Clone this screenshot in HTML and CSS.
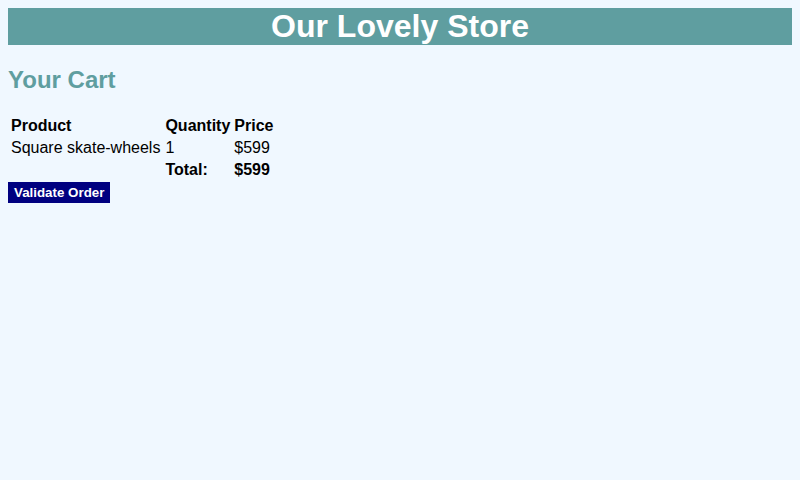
FILE: index.html
```html
<!DOCTYPE html>
<html>
<head>
<meta charset="utf-8">
<title>Our Lovely Store</title>
<link rel="stylesheet" href="styles.css">
</head>
<body>
<header class="site-header">
  <h1 class="site-title">Our Lovely Store</h1>
</header>
<h2 class="cart-title">Your Cart</h2>
<table class="cart-table">
  <tr>
    <th>Product</th>
    <th>Quantity</th>
    <th>Price</th>
  </tr>
  <tr>
    <td class="product-cell">Square skate-wheels</td>
    <td>1</td>
    <td>$599</td>
  </tr>
  <tr>
    <td></td>
    <th>Total:</th>
    <th>$599</th>
  </tr>
</table>
<button class="validate-btn">Validate Order</button>
</body>
</html>
```
FILE: styles.css
```css
html, body {
  background: #f0f8ff;
}
body {
  margin: 8px;
  font-family: "Liberation Sans", Arial, sans-serif;
  color: #000;
}
.site-header {
  background: #5f9ea0;
}
.site-title {
  margin: 0;
  color: #fff;
  text-align: center;
  font-size: 32px;
  font-weight: bold;
}
.cart-title {
  color: #5f9ea0;
  font-size: 24px;
  margin: 21px 0 20px;
}
.cart-table {
  border-spacing: 2px;
  font-size: 16px;
}
.cart-table th,
.cart-table td {
  padding: 1px;
  text-align: left;
}
.cart-table .product-cell {
  padding-right: 2px;
}
.validate-btn {
  display: block;
  background: #000080;
  color: #fff;
  border: none;
  border-radius: 0;
  font-family: "Liberation Sans", Arial, sans-serif;
  font-size: 13.333px;
  font-weight: bold;
  padding: 3px 6px;
  margin: 0;
}
```
